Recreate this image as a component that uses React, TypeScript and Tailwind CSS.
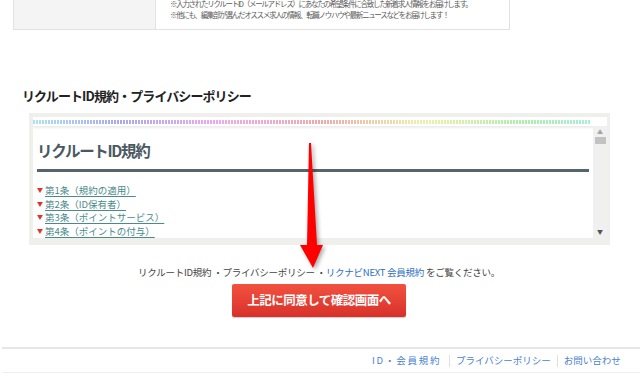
import React from "react";

const FONT = { fontFamily: '"Noto Sans CJK JP", "Noto Sans", sans-serif' };

// 点線のレインボー帯の色
function dashColor(i: number, n: number) {
  const hue = (190 + (i / n) * 330) % 360;
  return `hsl(${hue}, 70%, 80%)`;
}

function RainbowStrip() {
  const n = 186;
  return (
    <div className="flex h-[4px] gap-[1px] overflow-hidden">
      {Array.from({ length: n }).map((_, i) => (
        <div key={i} className="w-[2px] h-full shrink-0" style={{ background: dashColor(i, n) }} />
      ))}
    </div>
  );
}

const articles = ["第1条（規約の適用）", "第2条（ID保有者）", "第3条（ポイントサービス）", "第4条（ポイントの付与）"];

export default function App() {
  return (
    <div className="relative w-[640px] h-[380px] overflow-hidden bg-white text-[#333]" style={FONT}>
      {/* 上部のテーブル */}
      <div className="ml-[13px] w-[497px] h-[30px] flex border border-t-0 border-[#e2e2e2]">
        <div className="w-[142px] bg-[#f4f4f4] border-r border-[#e2e2e2]" />
        <div className="flex-1 overflow-hidden pl-[14px]">
          <div className="-mt-[2px] text-[7.5px] leading-[11px] tracking-[-1.3px] text-[#5a5a5a] whitespace-nowrap">
            <p>※入力されたリクルートID（メールアドレス）にあなたの希望条件に合致した新着求人情報をお届けします。</p>
            <p>※他にも、編集部が選んだオススメ求人の情報、転職ノウハウや最新ニュースなどをお届けします！</p>
          </div>
        </div>
      </div>

      {/* 見出し */}
      <h3 className="mt-[58px] ml-[22px] text-[13px] leading-[16px] tracking-[-0.9px] font-bold text-[#222]">
        リクルートID規約・プライバシーポリシー
      </h3>

      {/* 規約ボックス */}
      <div className="mt-[9px] ml-[29px] w-[581px] h-[132px] bg-[#efefeb] p-[4px] pr-[3px] pb-[7px] flex">
        <div className="flex-1 bg-white flex flex-col overflow-hidden">
          <div className="pt-[3px] pb-[2px] shadow-[0_2px_2px_rgba(0,0,0,0.08)]">
            <RainbowStrip />
          </div>
          <div className="flex-1 flex overflow-hidden">
            <div className="flex-1 overflow-hidden pl-[4px] pr-[4px]">
              <h4 className="mt-[14px] text-[15.5px] leading-[20px] tracking-[-1.3px] font-bold text-[#4b5862]">リクルートID規約</h4>
              <div className="mt-[9px] h-[3px] bg-[#56646e]" />
              <ul className="mt-[12px] flex flex-col gap-[1px]">
                {articles.map((a) => (
                  <li key={a} className="flex items-center gap-[2px] text-[9.5px] leading-[12.5px]">
                    <span className="text-[#e0302a] text-[6px] w-[6px]">▼</span>
                    <a className="text-[#4a8a8a] underline underline-offset-2">{a}</a>
                  </li>
                ))}
              </ul>
            </div>
            {/* スクロールバー */}
            <div className="w-[14px] bg-[#f0f0f0] flex flex-col items-center">
              <span className="mt-[2px] text-[6px] leading-[8px] text-[#a3a3a3]">▲</span>
              <div className="mt-[1px] w-[11px] h-[7px] bg-[#c2c2c2]" />
              <span className="mt-auto mb-[2px] text-[6px] leading-[8px] text-[#555]">▼</span>
            </div>
          </div>
        </div>
      </div>

      {/* 説明文とボタン */}
      <p className="mt-[21px] text-center text-[9.5px] leading-[12px] tracking-[-0.25px] text-[#444] pr-[2px]">
        リクルートID規約 ・プライバシーポリシー ・<a className="text-[#2e6fc2]">リクナビNEXT 会員規約</a> をご覧ください。
      </p>
      <div className="mt-[6px] flex justify-center pr-[2px]">
        <button className="w-[174px] h-[33px] rounded-[2px] bg-gradient-to-b from-[#f2513f] to-[#d8302a] text-white text-[12.5px] tracking-[-0.5px] font-bold shadow-[0_1px_1px_rgba(0,0,0,0.2)]">
          上記に同意して確認画面へ
        </button>
      </div>

      {/* フッター */}
      <div className="mt-[30px] ml-[2px] h-[2px] bg-[#e6e6e6]" />
      <div className="ml-[2px] h-[24px] pl-[370px] flex items-center overflow-hidden border-b border-[#eeeeee] text-[9.5px] text-[#4a7fcf] whitespace-nowrap">
        <a className="w-[77px] tracking-[1.8px]">ID・会員規約</a>
        <span className="h-[12px] w-px shrink-0 bg-[#e0e0e0]" />
        <a className="px-[6px]">プライバシーポリシー</a>
        <span className="h-[12px] w-px shrink-0 bg-[#e0e0e0]" />
        <a className="pl-[6px]">お問い合わせ</a>
      </div>

      {/* 赤い矢印（注釈） */}
      <svg className="absolute left-[296px] top-[140px] drop-shadow-[2px_2px_2px_rgba(0,0,0,0.35)]" width="32" height="132" viewBox="0 0 32 132">
        <polygon points="13,3 15,3 21,105 27,105 17,128 4,105 11,105" fill="#ff0000" />
      </svg>
    </div>
  );
}
